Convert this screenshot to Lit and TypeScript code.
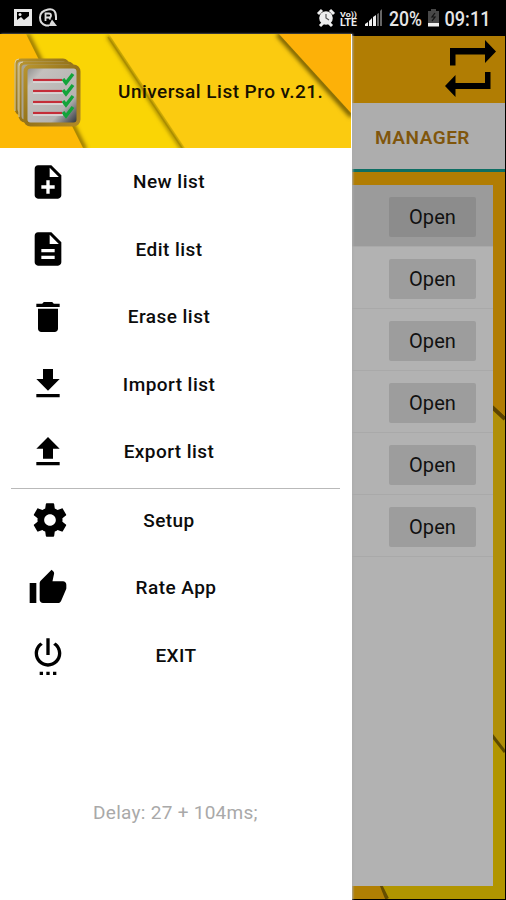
import { LitElement, html, svg, css } from "lit";
import { customElement } from "lit/decorators.js";

const icons: Record<string, string> = {
  add: "M14 2H6c-1.1 0-1.99.9-1.99 2L4 20c0 1.1.89 2 1.99 2H18c1.1 0 2-.9 2-2V8l-6-6zm2 14h-3v3h-2v-3H8v-2h3v-3h2v3h3v2zm-3-7V3.5L18.5 9H13z",
  edit: "M14 2H6c-1.1 0-1.99.9-1.99 2L4 20c0 1.1.89 2 1.99 2H18c1.1 0 2-.9 2-2V8l-6-6zm2 16H8v-2h8v2zm0-4H8v-2h8v2zm-3-5V3.5L18.5 9H13z",
  erase: "M6 19c0 1.1.9 2 2 2h8c1.1 0 2-.9 2-2V7H6v12zM19 4h-3.500l-1-1h-5l-1 1H5v2h14V4z",
  import: "M19 9h-4V3H9v6H5l7 7 7-7zM5 18v2h14v-2H5z",
  export: "M9 16h6v-6h4l-7-7-7 7h4zm-4 2h14v2H5z",
  setup: "M19.430 12.980c.040-.320.070-.640.070-.980s-.030-.660-.070-.980l2.110-1.650c.190-.150.240-.420.120-.640l-2-3.460c-.120-.220-.390-.300-.610-.220l-2.490 1c-.520-.400-1.080-.730-1.690-.980l-.380-2.650C14.460 2.180 14.250 2 14 2h-4c-.250 0-.460.180-.490.420l-.380 2.650c-.610.250-1.170.590-1.690.980l-2.490-1c-.230-.090-.490 0-.610.220l-2 3.460c-.130.220-.070.490.120.640l2.110 1.650c-.040.320-.070.650-.070.980s.030.660.070.980l-2.110 1.650c-.190.150-.240.420-.120.640l2 3.460c.120.220.390.300.610.220l2.490-1c.520.400 1.080.730 1.690.980l.380 2.650c.030.240.240.420.490.420h4c.250 0 .460-.180.490-.420l.380-2.650c.610-.250 1.170-.590 1.690-.980l2.490 1c.230.090.490 0 .610-.220l2-3.460c.120-.220.070-.490-.120-.640l-2.110-1.650zM12 15.500c-1.930 0-3.500-1.570-3.500-3.500s1.570-3.500 3.500-3.500 3.500 1.570 3.500 3.500-1.570 3.500-3.500 3.500z",
  rate: "M1 21h4V9H1v12zm22-11c0-1.100-.900-2-2-2h-6.310l.950-4.570.030-.320c0-.410-.170-.790-.440-1.060L14.170 1 7.590 7.590C7.220 7.950 7 8.450 7 9v10c0 1.100.900 2 2 2h9c.830 0 1.540-.500 1.840-1.220l3.020-7.050c.090-.230.140-.470.140-.730v-2z",
  exit: "M7 24h2v-2H7v2zm4 0h2v-2h-2v2zm2-22h-2v10h2V2zm3.560 2.440l-1.450 1.450C16.840 6.940 18 8.830 18 11c0 3.310-2.690 6-6 6s-6-2.690-6-6c0-2.170 1.160-4.060 2.880-5.120L7.440 4.440C5.360 5.880 4 8.280 4 11c0 4.420 3.580 8 8 8s8-3.580 8-8c0-2.720-1.360-5.120-3.440-6.560zM15 24h2v-2h-2v2z",
};

@customElement("menu-row")
class MenuRow extends LitElement {
  static properties = { icon: {}, label: {} };
  declare icon: string;
  declare label: string;
  static styles = css`
    :host { display: flex; align-items: center; height: 67.5px; }
    .icon { width: 40px; height: 40px; margin-left: 28px; flex: none; }
    .label { width: 202px; text-align: center; font-size: 19px; font-weight: 500; letter-spacing: 0.45px; color: #0c0c0c; white-space: nowrap; }
    :host(.shift) .label { margin-left: 7px; }
    :host(.gear) .icon { margin-left: 29.5px; margin-right: -1.5px; }
  `;
  render() {
    return html`<svg class="icon" viewBox="0 0 24 24"><path d=${icons[this.icon]} /></svg>
      <span class="label">${this.label}</span>`;
  }
}

@customElement("app-root")
class AppRoot extends LitElement {
  static styles = css`
    :host { display: flex; flex-direction: column; width: 506px; height: 900px; overflow: hidden; background: #000; font-family: Roboto, sans-serif; }
    .status { height: 34px; flex: none; display: block; background: #000; }
    .body { display: grid; grid-template-columns: 352px 1fr; height: 866px; }
    .drawer { background: #fff; position: relative; z-index: 1; box-shadow: 1px 0 2px #aaa; }
    .head { position: relative; display: flex; align-items: center; width: 351px; height: 114px; background: #fbcb10; overflow: hidden; }
    .bg { position: absolute; inset: 0; }
    .logo { position: relative; width: 68px; height: 70px; margin: 4px 0 0 14px; }
    .title { position: relative; margin-left: 36px; font-size: 19px; font-weight: 500; letter-spacing: 0.47px; white-space: nowrap; color: #171100; }
    .divider { height: 1.5px; background: #b9b9b9; margin: 2px 12px -2.5px 11px; }
    .delay { margin: 112px 0 0; width: 351px; text-align: center; font-size: 19px; line-height: 24px; color: #a9a9a9; letter-spacing: 0.28px; }
    .page { position: relative; display: flex; flex-direction: column; margin-top: 2px; margin-right: 1px; height: 863px; background: #b08000; }
    .bar { position: relative; height: 67px; display: flex; justify-content: flex-end; background: #b17d03; }
    .tab { position: relative; height: 66px; box-sizing: content-box; border-bottom: 3px solid #0e6e63; background: #adadad; display: flex; align-items: center; justify-content: center; font-size: 19px; font-weight: 600; color: #80560c; padding-right: 12px; letter-spacing: 0.5px; line-height: 66px; }
    .tab span { margin-top: 3px; }
    .list { position: relative; margin: 13px 12px 0 0; height: 701px; background: #b2b2b2; }
    .row { height: 62px; box-sizing: border-box; border-bottom: 1px solid #a9a9a9; display: flex; align-items: center; justify-content: flex-end; padding: 2px 17px 0 0; }
    .row:first-child { background: #9b9b9b; }
    .open { width: 87px; height: 40px; border-radius: 2px; background: #9d9d9d; display: flex; align-items: center; justify-content: center; font-size: 20px; color: #111; letter-spacing: 0.1px; }
    .row:first-child .open { background: #8c8c8c; }
  `;

  status() {
    return html`<svg class="status" width="506" height="34" viewBox="0 0 506 34">
      <path fill="#e8e8e8" fill-rule="evenodd" d="M14 9h18v17H14zM17 12v8l4-3 3 3 5-4v-4z" />
      <circle cx="20" cy="14.500" r="1.500" fill="#e8e8e8" />
      <path d="M49 25.500H46Q40 24 40 17.500T48 9.500 56 17V20" fill="none" stroke="#ddd" stroke-width="2" />
      <path d="M45.500 21V13.500H49A2 2 0 0 1 49 17.500H46M49 17.500l1.500 2" fill="none" stroke="#ddd" stroke-width="1.800" />
      <path d="M48.500 26l3.500-6.500 5 6.500z" fill="#ddd" />
      <circle cx="326" cy="18" r="6.800" fill="#eee" />
      <path d="M318 14l4-4M330 10l4 4M320 26l3-3M332 26l-3-3" stroke="#eee" stroke-width="3" />
      <path d="M326 14v4l3 2" fill="none" stroke="#555" stroke-width="1.200" />
      <text x="340" y="16.500" font-size="7.500" font-weight="700" fill="#eee" textLength="17" lengthAdjust="spacingAndGlyphs">Vo))</text>
      <text x="340" y="26.200" font-size="10" font-weight="700" fill="#eee" textLength="17" lengthAdjust="spacingAndGlyphs">LTE</text>
      <path d="M365 26v-2l3-2v4zM369 26v-5l3-3v8zM373 26v-9l3-2v11z" fill="#eee" />
      <path d="M377 26V14l2-1v13zM380 26V11l2-2v17z" fill="#666" />
      <text x="389" y="25.500" font-size="20" font-weight="500" fill="#e6e6e6" textLength="33" lengthAdjust="spacingAndGlyphs">20%</text>
      <path d="M428 26V11h3V9h5v2h3v15z" fill="#484848" />
      <path d="M428 23h11v3.500h-11z" fill="#eee" />
      <path d="M435 13l-3 4h3l-3 4" fill="none" stroke="#111" stroke-width="1.200" />
      <text x="444.500" y="25.500" font-size="20" font-weight="500" fill="#e6e6e6" textLength="46" lengthAdjust="spacingAndGlyphs">09:11</text>
    </svg>`;
  }

  logo() {
    const lines = [22, 33, 44, 55];
    return html`<svg class="logo" viewBox="0 0 68 70">
      <defs>
        <linearGradient id="paper" x2="1" y2="1"><stop offset="0" stop-color="#888" /><stop offset=".2" stop-color="#c4c1be" /><stop offset=".72" stop-color="#b5b3b2" /><stop offset="1" stop-color="#1c232c" /></linearGradient>
        <linearGradient id="gold" x2="1" y2="1"><stop offset="0" stop-color="#b8942f" /><stop offset=".5" stop-color="#94731a" /><stop offset="1" stop-color="#b18a26" /></linearGradient>
      </defs>
      <rect x="2" y="2" width="52" height="54" rx="5" fill="#b8b1a0" stroke="url(#gold)" stroke-width="3" />
      <rect x="6" y="5" width="53" height="58" rx="5" fill="#aaa391" stroke="url(#gold)" stroke-width="3" />
      <path d="M1 53V5Q1 1 5 1M5 59V8Q5 4 9 4" fill="none" stroke="#ddd0a0" stroke-width="1" />
      <rect x="11.500" y="8.500" width="53" height="58" rx="5" fill="url(#paper)" stroke="url(#gold)" stroke-width="4" />
      ${lines.map((y) => svg`<path d="M19 ${y + 1.5}h30" stroke="#ddd" stroke-width="2.500" /><path d="M19 ${y}h29" stroke="#c42d38" stroke-width="2.200" />
        <path d="M49 ${y - 1}l3 4 7-9" fill="none" stroke="#12a43a" stroke-width="3.400" />`)}
    </svg>`;
  }

  render() {
    return html`${this.status()}
      <div class="body">
        <div class="drawer">
          <div class="head">
            <svg class="bg" width="351" height="114" viewBox="0 0 351 114">
              <defs><filter id="soft" x="-20%" y="-20%" width="140%" height="140%"><feGaussianBlur stdDeviation="2" /></filter></defs>
              <path d="M0 0H109L184 114H0z" fill="#fad505" />
              <path d="M108 2L183 116" stroke="#806700" stroke-width="3" filter="url(#soft)" />
              <path d="M109 0L185 114H351V0z" fill="#fbcb10" />
              <path d="M108 3L184 117" stroke="#8b7000" stroke-width="1.500" opacity=".4" />
              <path d="M27 0L85 116" stroke="#806000" stroke-width="4" filter="url(#soft)" />
              <path d="M0 0H26L83 114H0z" fill="#fdb906" />
              <path d="M278 0L352 82" stroke="#6b5500" stroke-width="5" filter="url(#soft)" />
              <path d="M279 0H351V79z" fill="#fdb108" />
            </svg>
            ${this.logo()}
            <span class="title">Universal List Pro v.21.</span>
          </div>
          <menu-row icon="add" label="New list"></menu-row>
          <menu-row icon="edit" label="Edit list"></menu-row>
          <menu-row icon="erase" label="Erase list"></menu-row>
          <menu-row icon="import" label="Import list"></menu-row>
          <menu-row icon="export" label="Export list"></menu-row>
          <div class="divider"></div>
          <menu-row class="gear" icon="setup" label="Setup"></menu-row>
          <menu-row class="shift" icon="rate" label="Rate App"></menu-row>
          <menu-row class="shift" icon="exit" label="EXIT"></menu-row>
          <div class="delay">Delay: 27 + 104ms;</div>
        </div>
        <div class="page">
          <svg class="bg" width="153" height="863" viewBox="0 0 153 863">
            <path d="M0 0H153V863H0z" fill="#b19500" />
            <path d="M139 367L153 381V718L139 698z" fill="#b08f08" />
            <path d="M139 698L153 716" stroke="#5c4a00" stroke-width="3" />
            <path d="M139 370L153 383" stroke="#5c4300" stroke-width="4" />
            <path d="M0 0H153V380L139 367H0z" fill="#b17d03" />
            <path d="M28 849L35 863" stroke="#654d00" stroke-width="4" />
            <path d="M0 845H26L33 863H0z" fill="#b17f03" />
          </svg>
          <div class="bar">
            <svg width="64" height="67" viewBox="0 0 64 67">
              <path d="M9 29.500V12H44V4L55 15.500 44 27V18.500H14.500V29.500zM49.500 36V53H14.500V61L4 50 14.500 39V47H44V36z" />
            </svg>
          </div>
          <div class="tab"><span>MANAGER</span></div>
          <div class="list">${[0, 1, 2, 3, 4, 5].map(() => html`<div class="row"><div class="open">Open</div></div>`)}</div>
        </div>
      </div>`;
  }
}
